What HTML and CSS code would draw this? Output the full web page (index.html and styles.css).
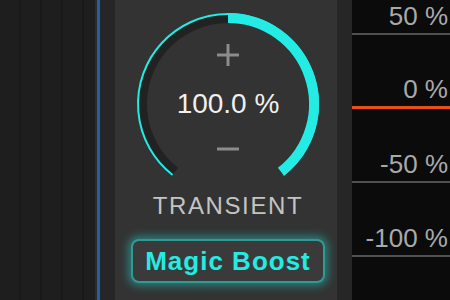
FILE: index.html
```html
<!DOCTYPE html>
<html lang="en">
  <head>
    <meta charset="UTF-8" />
    <meta name="viewport" content="width=device-width, initial-scale=1.0" />
    <title>Transient Shaper</title>
    <link rel="stylesheet" href="styles.css">
  </head>
  <body>
    <div class="tracks"></div>
    <div class="selected-line"></div>
    <div class="gutter"></div>

    <div class="panel">
      <div class="knob">
        <svg class="knob-dial" width="200" height="180" viewBox="0 0 200 180">
          <!-- track -->
          <path d="M 47.05 167.77 A 86 86 0 1 1 152.95 167.77"
                fill="none" stroke="#222" stroke-width="10" />
          <!-- thin outline -->
          <path d="M 44.59 170.92 A 90 90 0 1 1 155.41 170.92"
                fill="none" stroke="#24ebe3" stroke-width="2" />
          <!-- value -->
          <path d="M 100 14 A 86 86 0 0 1 152.95 167.77"
                fill="none" stroke="#24ebe3" stroke-width="10" />
          <!-- plus / minus -->
          <line x1="89" y1="51" x2="111" y2="51" stroke="#8c8c8c" stroke-width="3" />
          <line x1="100" y1="40" x2="100" y2="62" stroke="#8c8c8c" stroke-width="3" />
          <line x1="89" y1="145" x2="111" y2="145" stroke="#8c8c8c" stroke-width="3" />
        </svg>
        <div class="knob-value">100.0 %</div>
      </div>
      <div class="knob-label">TRANSIENT</div>
      <button class="magic-boost">Magic Boost</button>
    </div>

    <div class="gutter"></div>

    <div class="scale">
      <div class="tick first">50 %</div>
      <div class="tick zero">0 %</div>
      <div class="tick">-50 %</div>
      <div class="tick">-100 %</div>
      <div class="tick">-150 %</div>
    </div>
  </body>
</html>
```

FILE: styles.css
```css
body {
  margin: 0;
  padding: 0;
  width: 450px;
  height: 300px;
  overflow: hidden;
  display: flex;
  background-color: #0b0b0b;
  font-family: "Liberation Sans", Arial, sans-serif;
}

.tracks {
  width: 95px;
  background: repeating-linear-gradient(
    90deg,
    #1e1e1e 0,
    #1e1e1e 19px,
    #191919 19px,
    #191919 21px
  );
  border-right: 2px solid #2a2a2a;
}

.selected-line {
  width: 3px;
  background-color: #2160a8;
}

.gutter {
  width: 15px;
  background-color: #262626;
}

.panel {
  width: 222px;
  background-color: #333;
  display: flex;
  flex-direction: column;
  align-items: center;
  padding-top: 4px;
  padding-left: 4px;
  box-sizing: border-box;
}

.knob {
  position: relative;
  width: 200px;
  height: 180px;
}

.knob-dial {
  display: block;
}

.knob-value {
  position: absolute;
  left: 0;
  right: 0;
  top: 86px;
  text-align: center;
  font-size: 28px;
  line-height: 28px;
  color: #f0f0f0;
}

.knob-label {
  margin-top: 10px;
  font-size: 24px;
  line-height: 24px;
  letter-spacing: 1.6px;
  color: #c4c4c4;
}

.magic-boost {
  margin-top: 21px;
  width: 194px;
  height: 44px;
  padding: 0;
  display: flex;
  align-items: center;
  justify-content: center;
  background-color: #3a3a3a;
  border: 2px solid rgba(40, 220, 210, 0.6);
  border-radius: 8px;
  box-shadow: 0 0 8px 3px rgba(30, 220, 210, 0.45);
  font-family: "Liberation Sans", Arial, sans-serif;
  font-size: 26px;
  font-weight: bold;
  letter-spacing: 1px;
  color: #24ebe3;
}

.scale {
  flex: 1;
  display: flex;
  flex-direction: column;
}

.tick {
  flex: none;
  height: 68px;
  display: flex;
  align-items: flex-end;
  justify-content: flex-end;
  padding-right: 2px;
  padding-bottom: 4px;
  box-sizing: content-box;
  border-bottom: 2px solid #505050;
  font-size: 26px;
  line-height: 25px;
  color: #a9a9a9;
}

.tick.first {
  height: 29px;
}

.tick.zero {
  height: 67px;
  border-bottom: 3px solid #e8501a;
}
```
